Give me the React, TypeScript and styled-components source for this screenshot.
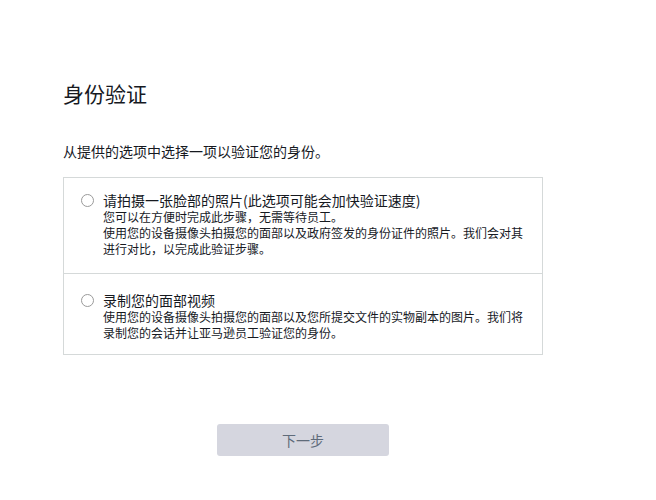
import React, { useState } from 'react';
import styled, { createGlobalStyle } from 'styled-components';

const GlobalStyle = createGlobalStyle`
    html, body {
        margin: 0;
        padding: 0;
        background: #ffffff;
    }
    body {
        font-family: "Noto Sans CJK SC", "Noto Sans", "Liberation Sans", sans-serif;
        color: #111111;
    }
`;

const options = [
    {
        id: 'photo',
        title: '请拍摄一张脸部的照片(此选项可能会加快验证速度)',
        lines: ['您可以在方便时完成此步骤，无需等待员工。', '使用您的设备摄像头拍摄您的面部以及政府签发的身份证件的照片。我们会对其进行对比，以完成此验证步骤。'],
    },
    {
        id: 'video',
        title: '录制您的面部视频',
        lines: ['使用您的设备摄像头拍摄您的面部以及您所提交文件的实物副本的图片。我们将录制您的会话并让亚马逊员工验证您的身份。'],
    },
];

const App: React.FC = () => {
    const [selected, setSelected] = useState<string | null>(null);

    return (
        <>
            <GlobalStyle />
            <Page>
                <Title>身份验证</Title>
                <Intro>从提供的选项中选择一项以验证您的身份。</Intro>
                <OptionList>
                    {options.map((opt) => (
                        <Option key={opt.id} first={opt.id === 'photo'} onClick={() => setSelected(opt.id)}>
                            <Radio checked={selected === opt.id} />
                            <OptionText>
                                <OptionTitle>{opt.title}</OptionTitle>
                                {opt.lines.map((line, i) => (
                                    <OptionBody key={i}>{line}</OptionBody>
                                ))}
                            </OptionText>
                        </Option>
                    ))}
                </OptionList>
                <Footer>
                    <NextButton disabled={!selected}>下一步</NextButton>
                </Footer>
            </Page>
        </>
    );
};

const Page = styled.div`
    width: 480px;
    padding: 79px 0 0 63px;
`;

const Title = styled.h1`
    margin: 0;
    font-size: 21px;
    font-weight: 400;
    line-height: 28px;
    color: #16191f;
`;

const Intro = styled.p`
    margin: 34px 0 0;
    font-size: 14px;
    line-height: 20px;
    color: #16191f;
`;

const OptionList = styled.div`
    margin-top: 16px;
    border: 1px solid #d5d9d9;
    display: flex;
    flex-direction: column;
`;

const Option = styled.label<{ first?: boolean }>`
    display: flex;
    gap: 9px;
    padding: ${(p) => (p.first ? '14px 16px 16px 17px' : '18px 16px 13px 17px')};
    border-top: ${(p) => (p.first ? 'none' : '1px solid #d5d9d9')};
    cursor: pointer;
`;

const Radio = styled.span<{ checked: boolean }>`
    flex: none;
    width: 11px;
    height: 11px;
    margin-top: 2px;
    border-radius: 50%;
    border: 1px solid #9a9a9a;
    background: ${(p) => (p.checked ? 'radial-gradient(circle, #0f1111 0 3px, #fff 3.5px)' : '#fff')};
`;

const OptionText = styled.div`
    display: flex;
    flex-direction: column;
`;

const OptionTitle = styled.div`
    font-size: 14px;
    line-height: 17px;
    color: #16191f;
`;

const OptionBody = styled.div`
    font-size: 12px;
    line-height: 16px;
    color: #16191f;
`;

const Footer = styled.div`
    display: flex;
    justify-content: center;
    margin-top: 69px;
`;

const NextButton = styled.button`
    width: 172px;
    height: 32px;
    border: none;
    border-radius: 3px;
    background: #d5d6df;
    color: #5f6b7a;
    font-family: "Noto Sans CJK SC", "Noto Sans", sans-serif;
    font-size: 14px;
`;

export default App;
